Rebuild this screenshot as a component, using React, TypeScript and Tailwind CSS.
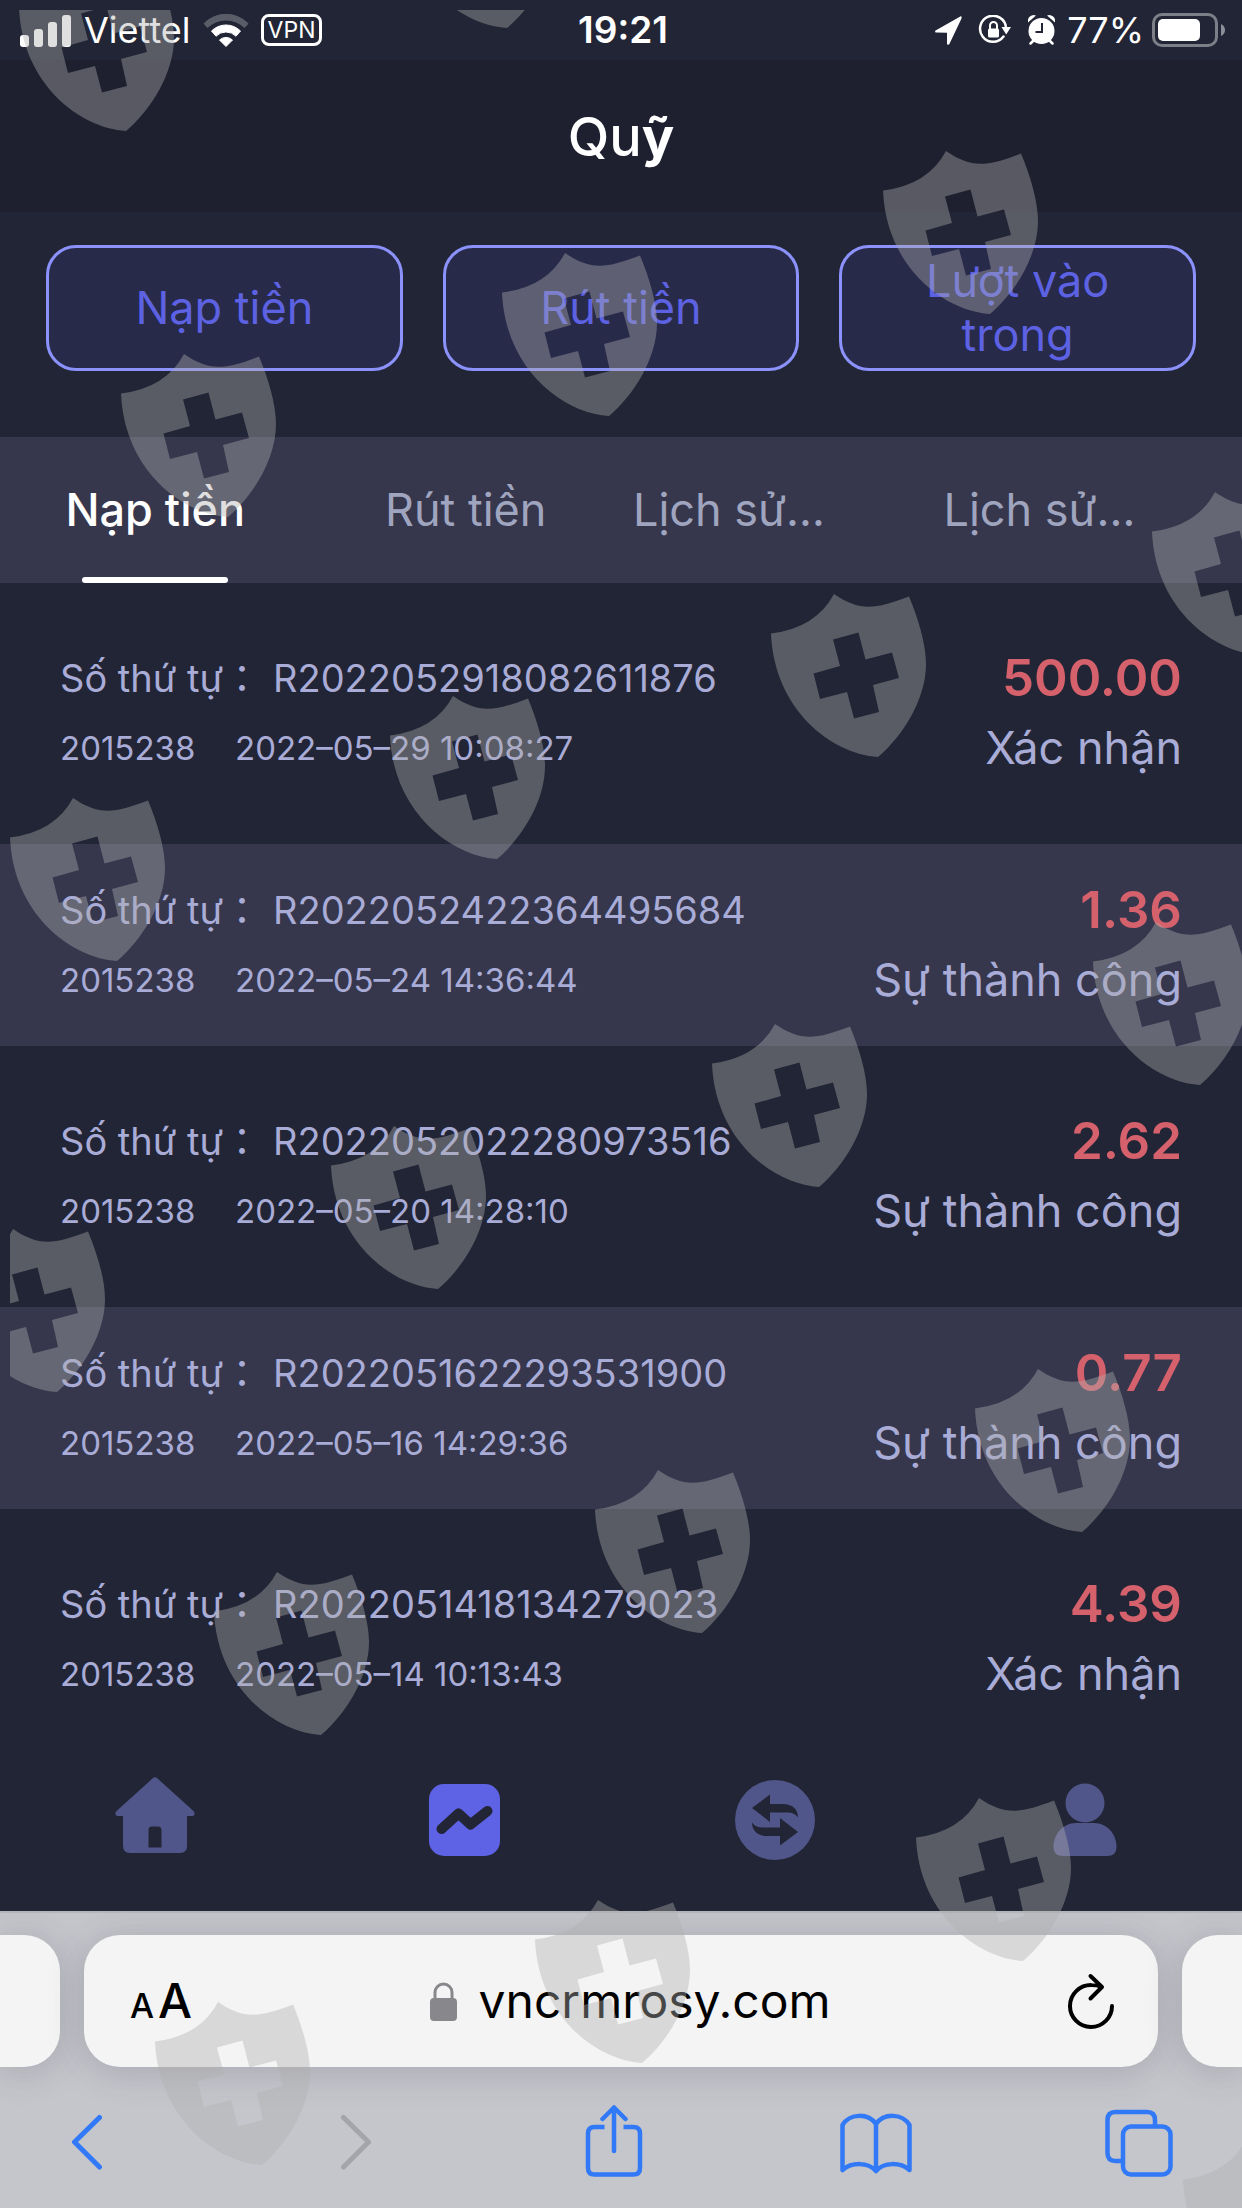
import { clsx } from "clsx";

const ACTIONS = ["Nạp tiền", "Rút tiền", "Lượt vào trong"];

const TABS = [
  { name: "Nạp tiền", active: true, clipped: false },
  { name: "Rút tiền", active: false, clipped: false },
  { name: "Lịch sử…", active: false, clipped: true },
  { name: "Lịch sử…", active: false, clipped: true },
];

const RECORDS = [
  { order: "R2022052918082611876", time: "2022–05–29 10:08:27", amount: "500.00", status: "Xác nhận" },
  { order: "R2022052422364495684", time: "2022–05–24 14:36:44", amount: "1.36", status: "Sự thành công" },
  { order: "R2022052022280973516", time: "2022–05–20 14:28:10", amount: "2.62", status: "Sự thành công" },
  { order: "R2022051622293531900", time: "2022–05–16 14:29:36", amount: "0.77", status: "Sự thành công" },
  { order: "R2022051418134279023", time: "2022–05–14 10:13:43", amount: "4.39", status: "Xác nhận" },
];

const SHIELDS = [
  [19, -32],
  [400, -135],
  [883, 151],
  [502, 253],
  [121, 354],
  [1152, 492],
  [771, 594],
  [390, 696],
  [10, 798],
  [1093, 922],
  [712, 1024],
  [331, 1126],
  [-50, 1229],
  [975, 1369],
  [595, 1470],
  [214, 1572],
  [916, 1798],
  [535, 1900],
  [155, 2002],
  [1183, 2140],
];

function StatusBar() {
  return (
    <div className="grid h-[60px] grid-cols-[1fr_auto_1fr] items-center bg-[#222535] pr-4 pl-5 text-[36px] text-white">
      <div className="flex items-center">
        <svg width="52" height="33" viewBox="0 0 52 33" fill="currentColor">
          <rect x="0" y="21" width="9" height="12" rx="3" />
          <rect x="14" y="15" width="9" height="18" rx="3" />
          <rect x="28" y="8" width="9" height="25" rx="3" />
          <rect x="42" y="1" width="9" height="32" rx="3" />
        </svg>
        <span className="ml-3">Viettel</span>
        <svg className="ml-3" width="46" height="34" viewBox="0 0 46 34" fill="currentColor">
          <path d="M1 10.500A31 31 0 0 1 45 10.500L41.500 14.500A26.500 26.500 0 0 0 4.500 14.500Z" opacity=".25" stroke="currentColor" strokeLinejoin="round" />
          <path d="M8.500 18A20.500 20.500 0 0 1 37.500 18L33 23.200A14 14 0 0 0 13 23.200Z" stroke="currentColor" strokeLinejoin="round" />
          <path d="M16.500 27A9.500 9.500 0 0 1 29.500 27L23 33.500Z" stroke="currentColor" strokeLinejoin="round" />
        </svg>
        <span className="ml-3 flex h-[32px] items-center rounded-lg border-[3px] border-white px-1 text-[23px]">VPN</span>
      </div>
      <span className="text-[37px] font-semibold">19:21</span>
      <div className="flex items-center justify-end">
        <svg width="27" height="30" viewBox="0 0 27 30" fill="currentColor">
          <path d="M26.500 3.500C26.900 2 26.200 1 25.300 1.400L1 15.300C-.4 16-.1 17.600 1.300 17.600L12 17.700V28.500C12 30 13.700 30.300 14.400 29Z" />
        </svg>
        <svg className="ml-4" width="34" height="30" viewBox="0 0 34 30" fill="none" stroke="currentColor" strokeWidth="2.500">
          <path d="M25.500 21.500A13 13 0 1 1 28 12.500" strokeLinecap="round" />
          <path d="M23.500 12H33L28.200 19.500Z" fill="currentColor" stroke="none" />
          <rect x="10" y="13.500" width="11" height="9" rx="1.500" fill="currentColor" stroke="none" />
          <path d="M12 14v-3.500a3.500 3.500 0 0 1 7 0V14" strokeWidth="2" />
        </svg>
        <svg className="ml-4" width="27" height="30" viewBox="0 0 27 30" fill="currentColor">
          <circle cx="13.500" cy="16" r="13" />
          <path d="M0 7.500A6 6 0 0 1 8 0.500ZM27 7.500A6 6 0 0 0 19 0.500Z" />
          <path d="M2.500 28.500L6 25M24.500 28.500L21 25" stroke="currentColor" strokeWidth="2.500" strokeLinecap="round" />
          <path d="M14 8V17H7.500" fill="none" stroke="#222535" strokeWidth="2" />
        </svg>
        <span className="ml-3">77%</span>
        <svg className="ml-2" width="74" height="34" viewBox="0 0 74 34" fill="none">
          <rect x="1.500" y="1.500" width="63" height="31" rx="8.500" stroke="#7c7e88" strokeWidth="3" />
          <rect x="6" y="6" width="42" height="22" rx="5" fill="#fff" />
          <path d="M69 11q4 2 4 6t-4 6Z" fill="#8d8f98" />
        </svg>
      </div>
    </div>
  );
}

function Record({ order, time, amount, status, striped }: (typeof RECORDS)[number] & { striped: boolean }) {
  return (
    <li
      className={clsx(
        "flex justify-between px-[60px] leading-[70px] whitespace-nowrap text-[#a9acd6]",
        striped ? "bg-[#36374d] py-[31px]" : "pt-[60px] pb-[61px] last:pb-0",
      )}
    >
      <div>
        <p className="flex text-[38px]">
          <span className="w-[213px]">Số thứ tự：</span>
          <span>{order}</span>
        </p>
        <p className="flex text-[33px]">
          <span className="w-[175px]">2015238</span>
          <span>{time}</span>
        </p>
      </div>
      <div className="text-right">
        <p className="text-[51px] font-semibold text-[#d4616b]">{amount}</p>
        <p className="text-[45px]">{status}</p>
      </div>
    </li>
  );
}

function BottomNav() {
  return (
    <nav className="grid grid-cols-4 justify-items-center pt-9 pb-[46px] text-[#50568a]">
      <a href="#home" aria-label="Home">
        <svg width="90" height="90" viewBox="0 0 90 90" fill="currentColor">
          <path
            fillRule="evenodd"
            d="M42.500 3.500Q45 1 47.500 3.500L84 36.500Q86 41 82 41H77V71Q77 78 70 78H20Q13 78 13 71V41H8Q4 41 6 36.500ZM42 51.500Q38.500 51.500 38.500 55V72.500H51.500V55Q51.500 51.500 48 51.500Z"
          />
        </svg>
      </a>
      <a href="#fund" aria-label="Fund" className="text-[#5e62e4]">
        <svg width="90" height="90" viewBox="0 0 90 90">
          <rect x="8" y="9" width="71" height="72" rx="15" fill="currentColor" />
          <path d="M20.500 54L37.500 38.500L49.500 49.500L66.500 36" fill="none" stroke="#222535" strokeWidth="10" strokeLinecap="round" strokeLinejoin="round" />
        </svg>
      </a>
      <a href="#exchange" aria-label="Exchange">
        <svg width="90" height="90" viewBox="0 0 90 90">
          <circle cx="44" cy="45" r="40" fill="currentColor" />
          <g fill="#222535">
            <path d="M21 33L39 19.500V29H52C61 29 67 34 67 42.500C64 38.500 61 37.500 55 37.500H39V47Z" />
            <path d="M21 33L39 19.500V29H52C61 29 67 34 67 42.500C64 38.500 61 37.500 55 37.500H39V47Z" transform="rotate(180 44 45)" />
          </g>
        </svg>
      </a>
      <a href="#profile" aria-label="Profile">
        <svg width="90" height="90" viewBox="0 0 90 90" fill="currentColor">
          <circle cx="43" cy="28" r="19.500" />
          <path d="M11.500 72C11.500 59 21 48 34 48H52C65 48 74.500 59 74.500 72Q74.500 81 65 81H21Q11.500 81 11.500 72Z" />
        </svg>
      </a>
    </nav>
  );
}

function BrowserBar() {
  return (
    <footer className="overflow-hidden border-t-2 border-[#b4b5ba] bg-[#c5c6cb] pt-[22px] pb-[29px]">
      <div className="flex gap-6">
        <div className="h-[132px] w-[60px] rounded-r-[36px] bg-[#f4f4f4] shadow-[0_4px_36px_rgba(60,60,80,0.22)]" />
        <div className="flex h-[132px] flex-1 items-center justify-between rounded-[36px] bg-[#f4f4f4] px-[44px] text-black shadow-[0_4px_36px_rgba(60,60,80,0.22)]">
          <button aria-label="Text size" className="flex items-baseline gap-1 pl-[2px] text-[48px] font-medium">
            <span className="text-[34px]">A</span>A
          </button>
          <div className="flex items-center gap-[22px]">
            <svg width="27" height="39" viewBox="0 0 27 39">
              <rect y="16" width="27" height="23" rx="4" fill="#88888c" />
              <path d="M5 17V10.500a8.500 8.500 0 0 1 17 0V17" fill="none" stroke="#88888c" strokeWidth="3" />
            </svg>
            <span className="text-[48px]">vncrmrosy.com</span>
          </div>
          <button aria-label="Reload">
            <svg width="46" height="56" viewBox="0 0 46 56" fill="none" stroke="#000" strokeWidth="4" strokeLinecap="round" strokeLinejoin="round">
              <path d="M33 13.500C30 12.500 27 12 23.500 12A21 21 0 1 0 44 33" />
              <path d="M22.500 3L34 14L22.500 25.500" />
            </svg>
          </button>
        </div>
        <div className="h-[132px] w-[60px] rounded-l-[36px] bg-[#f4f4f4] shadow-[0_4px_36px_rgba(60,60,80,0.22)]" />
      </div>

      <div className="mt-[38px] flex items-center justify-between pr-[69px] pl-[71px] text-[#3179f6]">
        <div className="flex w-[316px] justify-between pr-[15px]">
          <button aria-label="Back">
            <svg width="32" height="74" viewBox="0 0 32 74" fill="none" stroke="currentColor" strokeWidth="5" strokeLinecap="round" strokeLinejoin="round">
              <path d="M28.500 12.500L3.500 37L28.500 62" />
            </svg>
          </button>
          <button aria-label="Forward" className="text-[#a4a5a9]">
            <svg width="32" height="74" viewBox="0 0 32 74" fill="none" stroke="currentColor" strokeWidth="5" strokeLinecap="round" strokeLinejoin="round">
              <path d="M3.500 12.500L28.500 37L3.500 62" />
            </svg>
          </button>
        </div>
        <button aria-label="Share">
          <svg width="68" height="74" viewBox="0 0 68 74" fill="none" stroke="currentColor" strokeWidth="4.500" strokeLinejoin="round">
            <path d="M24.500 22H14.500Q8 22 8 28.500V63Q8 69.500 14.500 69.500H53.500Q60 69.500 60 63V28.500Q60 22 53.500 22H43.500" />
            <path d="M34 46V2.500M22.500 14L34 2.500L45.500 14" strokeLinecap="round" />
          </svg>
        </button>
        <button aria-label="Bookmarks">
          <svg width="72" height="74" viewBox="0 0 72 74" fill="none" stroke="currentColor" strokeWidth="4.500" strokeLinejoin="round" strokeLinecap="round">
            <path d="M36 66C28 57 12 57 2.500 65V20C10 8 28 8 36 19C44 8 62 8 69.500 20V65C60 57 44 57 36 66ZM36 19V66" />
          </svg>
        </button>
        <button aria-label="Tabs">
          <svg width="68" height="74" viewBox="0 0 68 74" fill="none" stroke="currentColor" strokeWidth="4.500">
            <path d="M18 56H10.500Q2.500 56 2.500 48V15Q2.500 7 10.500 7H42Q50 7 50 15V21" />
            <rect x="18" y="21.500" width="47.500" height="48" rx="8" />
          </svg>
        </button>
      </div>
    </footer>
  );
}

function Watermark() {
  return (
    <svg className="pointer-events-none absolute inset-0 h-full w-full" aria-hidden="true">
      <clipPath id="sheet">
        <rect x="10" y="10" width="100%" height="100%" />
      </clipPath>
      <g clipPath="url(#sheet)" fill="#b0b0b0" fillOpacity="0.4">
        {SHIELDS.map(([x, y]) => (
          <path
            key={`${x}-${y}`}
            transform={`translate(${x} ${y})`}
            fillRule="evenodd"
            d="M0 39.500Q45 34 63 0C88 17 103 16 138 2.500C147 24 155 50 155 70C155 105 132 142 107 163C60 160 3 115 0 39.500ZM62 45.500L69 72L42.500 79.500L49 105L76 98L83 124.500L108 118L102 91L128 84L121 58.500L94.500 65.500L87.500 38.500Z"
          />
        ))}
      </g>
    </svg>
  );
}

export default function App() {
  return (
    <div className="relative flex min-h-screen flex-col overflow-hidden bg-[#222535] font-['Inter','Liberation_Sans','Noto_Sans_CJK_JP',sans-serif]">
      <StatusBar />
      <header className="flex h-[152px] items-center justify-center bg-[#1e2030]">
        <h1 className="text-[54px] font-medium text-white">
          Qu<b>ỹ</b>
        </h1>
      </header>

      <div className="grid grid-cols-3 gap-10 px-[46px] pt-[33px] pb-[66px]">
        {ACTIONS.map((name) => (
          <button
            key={name}
            className="h-[126px] rounded-[30px] border-[3px] border-[#8c92fb] bg-[#282a4a] px-10 text-[45px] leading-[54px] text-[#5d62e3]"
          >
            {name}
          </button>
        ))}
      </div>

      <div role="tablist" className="grid grid-cols-4 bg-[#36374d]">
        {TABS.map(({ name, active, clipped }, i) => (
          <button
            key={i}
            role="tab"
            aria-selected={active}
            className={clsx(
              "relative h-[146px] px-3 text-[45px]",
              clipped ? "text-left" : "text-center",
              active ? "font-medium text-white" : "text-[#a0a5bf]",
            )}
          >
            {name}
            {active && <span className="absolute bottom-0 left-1/2 h-[6px] w-[146px] -translate-x-1/2 rounded-full bg-white" />}
          </button>
        ))}
      </div>

      <ul className="flex-1">
        {RECORDS.map((record, i) => (
          <Record key={record.order} {...record} striped={i % 2 === 1} />
        ))}
      </ul>

      <BottomNav />
      <BrowserBar />
      <Watermark />
    </div>
  );
}
